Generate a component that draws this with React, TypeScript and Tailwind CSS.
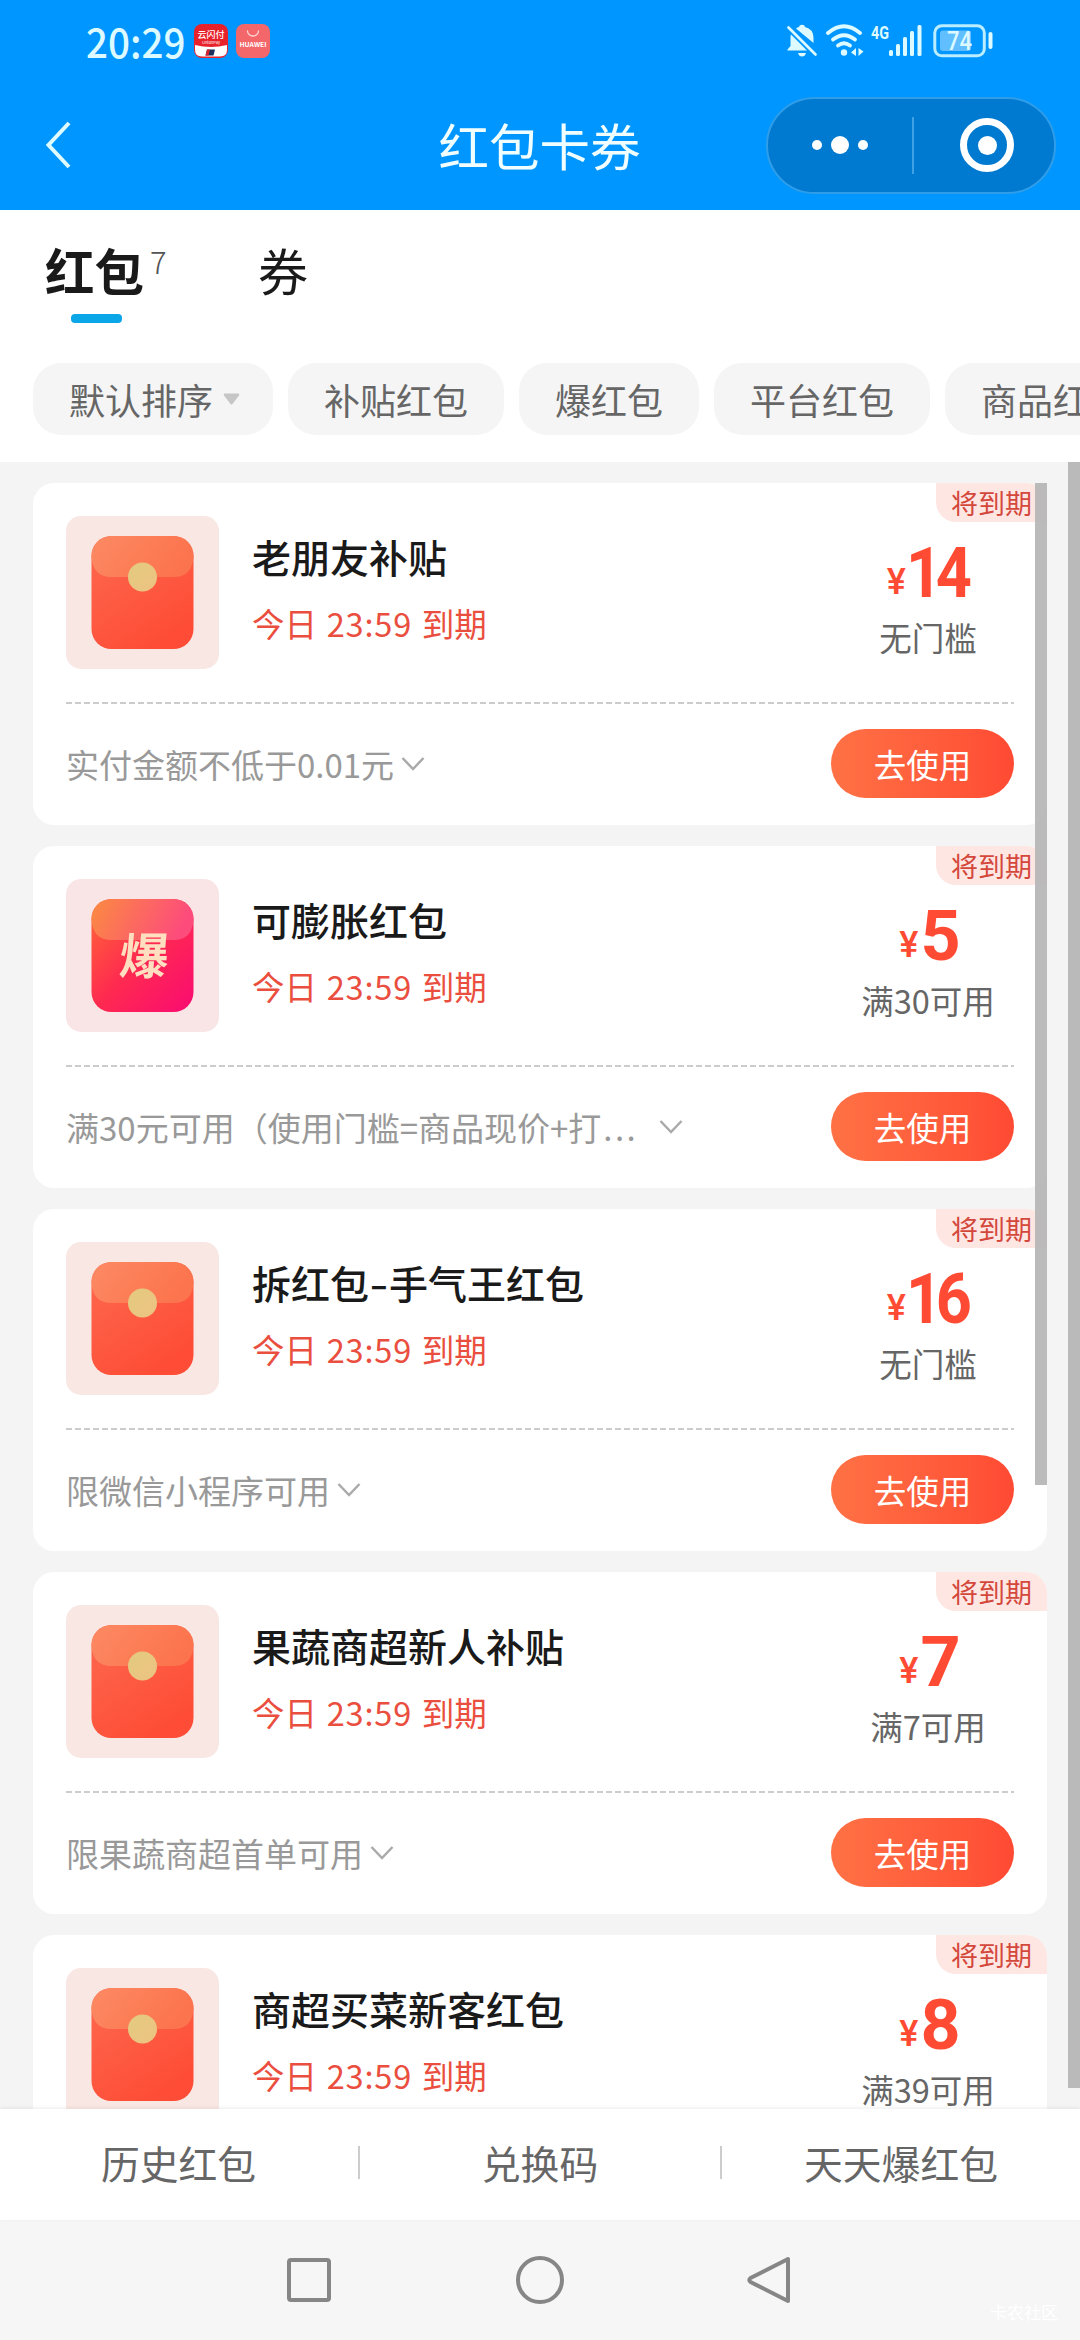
import { useState } from "react";

interface Coupon {
    id: number;
    title: string;
    price: string;
    condition: string;
    rule: string;
    burst?: boolean;
    longRule?: boolean;
}

const coupons: Coupon[] = [
    { id: 1, title: "老朋友补贴", price: "14", condition: "无门槛", rule: "实付金额不低于0.01元" },
    { id: 2, title: "可膨胀红包", price: "5", condition: "满30可用", rule: "满30元可用（使用门槛=商品现价+打", burst: true, longRule: true },
    { id: 3, title: "拆红包-手气王红包", price: "16", condition: "无门槛", rule: "限微信小程序可用" },
    { id: 4, title: "果蔬商超新人补贴", price: "7", condition: "满7可用", rule: "限果蔬商超首单可用" },
    { id: 5, title: "商超买菜新客红包", price: "8", condition: "满39可用", rule: "" },
];

const filters = ["默认排序", "补贴红包", "爆红包", "平台红包", "商品红包"];

function StatusBar() {
    return (
        <div className="flex h-[82px] items-center pl-[86px] pr-[87px] text-[#dcfaff]">
            <span className="-mt-[2px] w-[108px] origin-left scale-x-[0.94] text-[41px] font-medium leading-none">20:29</span>

            {/* notification icons */}
            <svg className="h-[34px] w-[34px]" viewBox="0 0 34 34">
                <rect width="34" height="34" rx="8" fill="#e8222b" />
                <path d="M1 21Q17 25 33 21V26Q33 32.500 26 32.500H8Q1 32.500 1 26Z" fill="#fff" />
                <path d="M13 25.500h8l-1.500 6h-8z" fill="#1b2f5c" />
                <path d="M13 25.500h3l-1.500 6h-3z" fill="#d5242c" />
                <text x="17" y="14" textAnchor="middle" fontSize="9" fontWeight="500" fill="#fff">云闪付</text>
                <text x="17" y="19.500" textAnchor="middle" fontSize="4" fill="#fff">UnionPay</text>
            </svg>
            <svg className="ml-2 h-[34px] w-[34px]" viewBox="0 0 34 34">
                <rect width="34" height="34" rx="8" fill="#f3666a" />
                <path d="M11.500 7a5.500 5 0 0 0 11 0" fill="none" stroke="#ffd5d5" strokeWidth="1.300" strokeLinecap="round" />
                <text x="17" y="22.500" textAnchor="middle" fontSize="6.200" fontWeight="700" fill="#fff" textLength="27" lengthAdjust="spacingAndGlyphs">HUAWEI</text>
            </svg>

            <svg className="ml-auto h-[34px] w-[30px]" viewBox="0 0 30 34" fill="currentColor">
                <path d="M4 10.500L20 26.500H0.500V25.500L3.500 22V13Q3.500 11.500 4 10.500Z" />
                <path d="M9 4.500Q10.500 3.300 12 3Q12.300 0.700 15 0.700Q17.700 0.700 18 3Q26.500 5 26.500 14V19Z" />
                <path d="M11 29h8q-1 3.500-4 3.500t-4-3.500z" />
                <path d="M1.500 3.500L28.500 30.500" stroke="currentColor" strokeWidth="2.600" strokeLinecap="round" />
            </svg>
            <svg className="ml-[9px] h-[34px] w-[38px]" viewBox="0 0 38 34" fill="none" stroke="currentColor" strokeWidth="3.800" strokeLinecap="round">
                <path d="M2 9Q18 -4.500 34 9" />
                <path d="M7 15.500Q18 7 29 15.500" />
                <path d="M12 21.500Q18 17 24 21.500" />
                <circle cx="18" cy="28.500" r="3.200" fill="currentColor" stroke="none" />
                <path d="M30 24v8l-5-3.500zM32.500 32v-8l5 3.500z" fill="currentColor" stroke="none" />
            </svg>
            <svg className="ml-[7px] h-[34px] w-[52px] overflow-visible" viewBox="0 0 52 34" fill="currentColor">
                <text x="0" y="14.500" fontSize="19" fontWeight="700" fontFamily="Roboto" textLength="18" lengthAdjust="spacingAndGlyphs">4G</text>
                <rect x="18" y="26" width="4" height="6" rx="1.500" />
                <rect x="25" y="20" width="4" height="12" rx="1.500" />
                <rect x="32" y="13" width="4" height="19" rx="1.500" />
                <rect x="39" y="7" width="4" height="25" rx="1.500" />
                <rect x="46.500" y="1" width="4" height="31" rx="1.500" />
            </svg>
            <svg className="ml-[10px] h-[34px] w-[60px]" viewBox="0 0 60 34">
                <rect x="1.800" y="1.800" width="49.500" height="30" rx="7" fill="none" stroke="#b9edff" strokeWidth="3" />
                <rect x="7" y="6.500" width="31" height="20.500" rx="3" fill="#62bfff" />
                <rect x="55.500" y="8" width="4" height="17" rx="2" fill="currentColor" />
                <text x="26.500" y="25.500" textAnchor="middle" fontSize="25" fontWeight="500" fill="currentColor" fontFamily="Roboto" textLength="25" lengthAdjust="spacingAndGlyphs">74</text>
            </svg>
        </div>
    );
}

function Header() {
    return (
        <header className="h-[210px] bg-[#0096ff]">
            <StatusBar />
            <div className="flex h-[126px] items-center justify-between pl-[45px] pr-6">
                <svg className="h-[48px] w-[26px]" viewBox="0 0 26 48" fill="none" stroke="#e0fbff" strokeWidth="4">
                    <path d="M24 2L3.500 24L24 46" />
                </svg>
                <h1 className="-mt-[2px] ml-[242px] text-[50.500px] leading-none text-[#f0feff]">红包卡券</h1>
                <div className="flex h-[97px] w-[290px] items-center rounded-full border-2 border-[#2f9de8] bg-[#007ad0]">
                    <div className="flex w-[144px] items-center justify-center gap-[9px]">
                        <span className="size-[10px] rounded-full bg-white" />
                        <span className="size-[18px] rounded-full bg-white" />
                        <span className="size-[10px] rounded-full bg-white" />
                    </div>
                    <div className="h-[57px] w-[2px] bg-[#3fa0e4]" />
                    <div className="ml-[46px] flex size-[54px] items-center justify-center rounded-full border-[7px] border-white">
                        <span className="size-[19px] rounded-full bg-white" />
                    </div>
                </div>
            </div>
        </header>
    );
}

function PacketIcon({ burst }: { burst?: boolean }) {
    if (burst) {
        return (
            <svg className="size-[153px] shrink-0" viewBox="0 0 153 153">
                <defs>
                    <linearGradient id="burstBody" x1="0" y1="0" x2="1" y2="1">
                        <stop offset="0" stopColor="#ff6a35" />
                        <stop offset="0.5" stopColor="#fe2a50" />
                        <stop offset="1" stopColor="#fa0b72" />
                    </linearGradient>
                    <linearGradient id="burstFlap" x1="0" y1="0" x2="1" y2="0.200">
                        <stop offset="0" stopColor="#fb8b41" />
                        <stop offset="1" stopColor="#fd4b7c" />
                    </linearGradient>
                </defs>
                <rect width="153" height="153" rx="15" fill="#f9e5e6" />
                <rect x="25.500" y="20" width="102" height="113" rx="20" fill="url(#burstBody)" />
                <path d="M25.500 40a20 20 0 0 1 20-20h62a20 20 0 0 1 20 20q-1 21-20 21h-62q-19 0-20-21z" fill="url(#burstFlap)" />
                <text x="77" y="95" textAnchor="middle" fontSize="49" fontWeight="700" fill="#ffdfc0" transform="translate(8 0) skewX(-5)">爆</text>
            </svg>
        );
    }
    return (
        <svg className="size-[153px] shrink-0" viewBox="0 0 153 153">
            <defs>
                <linearGradient id="packetBody" x1="0" y1="0" x2="0.600" y2="1">
                    <stop offset="0" stopColor="#fd6a50" />
                    <stop offset="1" stopColor="#fe4c36" />
                </linearGradient>
                <linearGradient id="packetFlap" x1="0" y1="0" x2="1" y2="0.300">
                    <stop offset="0" stopColor="#fc8a64" />
                    <stop offset="1" stopColor="#fc744d" />
                </linearGradient>
                <linearGradient id="packetSeal" x1="0" y1="0" x2="1" y2="1">
                    <stop offset="0" stopColor="#e3cb80" />
                    <stop offset="1" stopColor="#edc282" />
                </linearGradient>
            </defs>
            <rect width="153" height="153" rx="15" fill="#f9e7e3" />
            <rect x="25.500" y="20" width="102" height="113" rx="20" fill="url(#packetBody)" />
            <path d="M25.500 40a20 20 0 0 1 20-20h62a20 20 0 0 1 20 20q-1 21-20 21h-62q-19 0-20-21z" fill="url(#packetFlap)" />
            <circle cx="76.500" cy="61" r="14.500" fill="url(#packetSeal)" />
        </svg>
    );
}

function CouponTitle({ title }: { title: string }) {
    const [left, right] = title.split("-");

    return (
        <h2 className="text-[39px] font-medium leading-[56px] text-[#1a1a1a]">
            {left}
            {right && <span className="mx-[3px] inline-block scale-x-[1.35]">-</span>}
            {right}
        </h2>
    );
}

function CouponCard({ coupon }: { coupon: Coupon }) {
    return (
        <div className="relative h-[342px] shrink-0 overflow-hidden rounded-[21px] bg-white px-[33px] pt-[33px]">
            <span className="absolute right-0 top-0 flex h-[39px] w-[111px] items-center rounded-bl-[20px] bg-[#fee6e3] pl-[15px] text-[27px] leading-none text-[#d4483c]">将到期</span>

            <div className="flex h-[153px]">
                <PacketIcon burst={coupon.burst} />
                <div className="ml-[33px] flex-1 pt-[12px]">
                    <CouponTitle title={coupon.title} />
                    <p className="mt-[16px] text-[32.500px] leading-[46px] text-[#ea4e3e] [word-spacing:2.5px]">
                        今日 <span className="tracking-[0.8px]">23:59</span> 到期
                    </p>
                </div>
                <div className="w-[172px] pt-[22px] text-center">
                    <div className="flex h-[70px] items-baseline justify-center font-[Roboto] leading-[70px] text-[#ff4b33]">
                        <span className="relative -top-[3px] text-[36px] font-medium">¥</span>
                        <span className={coupon.price.length > 1 ? "inline-block -mr-[3px] origin-left scale-x-[0.9] text-[70px] font-bold tracking-[-7px]" : "ml-[2px] inline-block text-[70px] font-bold tracking-[-4px]"}>{coupon.price}</span>
                    </div>
                    <p className="mt-[6px] text-[32.500px] leading-[46px] text-[#666]">{coupon.condition}</p>
                </div>
            </div>

            <div className="mt-[33px] h-[2px] bg-[repeating-linear-gradient(90deg,#ccc_0_6px,transparent_6px_9px)]" />

            <div className="mt-[25px] flex h-[69px] items-center">
                <span className={coupon.longRule ? "w-[586px] whitespace-nowrap pt-[2px] text-[33px] text-[#999]" : "whitespace-nowrap pt-[2px] text-[33px] text-[#999]"}>
                    {coupon.rule}
                    {coupon.longRule && <span className="ml-[2px] tracking-[2.500px]">...</span>}
                </span>
                <svg className="ml-[7px] h-[16px] w-[24px]" viewBox="0 0 24 16" fill="none" stroke="#aaa" strokeWidth="2.500">
                    <path d="M1.500 2L12 13L22.500 2" />
                </svg>
                <button type="button" className="ml-auto h-[69px] w-[183px] rounded-full bg-linear-to-r from-[#ff7145] to-[#ff4a33] pt-[2px] text-[32.500px] leading-none text-white">去使用</button>
            </div>
        </div>
    );
}

function App() {
    const [filter, setFilter] = useState(0);

    return (
        <div className="flex h-[2340px] w-[1080px] flex-col overflow-hidden bg-[#f4f4f4] font-['Noto_Sans_CJK_SC',sans-serif]">
            <Header />

            <div className="h-[252px] shrink-0 bg-white">
                <div className="flex h-[153px] pl-[45px] pt-[35px]">
                    <div className="w-[126px]">
                        <div className="flex whitespace-nowrap">
                            <span className="text-[49.500px] font-bold leading-[50px] text-[#1a1a1a]">红包</span>
                            <sup className="top-0 ml-[6px] text-[31px] font-light leading-[32px] text-[#555]">7</sup>
                        </div>
                        <div className="ml-[26px] mt-[19px] h-[9px] w-[51px] rounded-[4px] bg-[#0aa6e8]" />
                    </div>
                    <span className="ml-[87px] text-[50px] leading-[49px] text-[#1a1a1a]">券</span>
                </div>
                <div className="flex gap-[15px] overflow-hidden pl-[33px]">
                    {filters.map((name, i) => (
                        <button key={name} type="button" onClick={() => setFilter(i)} aria-pressed={filter === i} className="flex h-[72px] shrink-0 items-center rounded-[28px] bg-[#f5f5f5] px-[36px] text-[36px] leading-none text-[#666]">
                            {name}
                            {i === 0 && (
                                <svg className="-mr-[3px] ml-[10px] h-[12px] w-[17px]" viewBox="0 0 17 12">
                                    <path d="M1.500 0.500h14q1.500 0.500 0.500 2L9.500 11q-1 1-2 0L1 2.500q-1-1.500 0.500-2z" fill="#c6c6c6" />
                                </svg>
                            )}
                        </button>
                    ))}
                </div>
            </div>

            <main className="relative h-[1647px] shrink-0 overflow-hidden">
                <div className="flex flex-col gap-[21px] px-[33px] pt-[21px]">
                    {coupons.map((c) => (
                        <CouponCard key={c.id} coupon={c} />
                    ))}
                </div>
                {/* inner and outer scrollbars */}
                <div className="absolute right-[33px] top-[21px] h-[1002px] w-[12px] bg-[#b4b4b4]/90" />
                <div className="absolute right-0 top-0 h-[1626px] w-[12px] bg-[#bababa]" />
            </main>

            <footer className="z-10 grid h-[111px] shrink-0 grid-cols-3 items-center bg-white pb-[4px] text-center text-[38.800px] leading-none text-[#666] shadow-[0_-1px_4px_rgba(0,0,0,0.08)]">
                <span className="-ml-[3px]">历史红包</span>
                <span className="-ml-[2px] -mr-[2px] border-x-2 border-[#ccc] leading-[33px]">兑换码</span>
                <span className="pl-[2px]">天天爆红包</span>
            </footer>

            <nav className="flex h-[120px] shrink-0 items-center bg-[#f6f6f6] pl-[285px]">
                <svg className="size-[48px]" viewBox="0 0 48 48" fill="none" stroke="#868686" strokeWidth="4">
                    <rect x="4" y="4" width="40" height="40" rx="2" />
                </svg>
                <svg className="ml-[183px] size-[48px]" viewBox="0 0 48 48" fill="none" stroke="#868686" strokeWidth="4">
                    <circle cx="24" cy="24" r="22" />
                </svg>
                <svg className="ml-[181px] size-[48px]" viewBox="0 0 48 48" fill="none" stroke="#868686" strokeWidth="4" strokeLinejoin="round">
                    <path d="M43 3V45L5.500 26Q3 24 5.500 22Z" />
                </svg>
                <span className="ml-auto mr-[22px] mt-[62px] text-[17px] leading-none text-white">卡农社区</span>
            </nav>
        </div>
    );
}

export default App;
